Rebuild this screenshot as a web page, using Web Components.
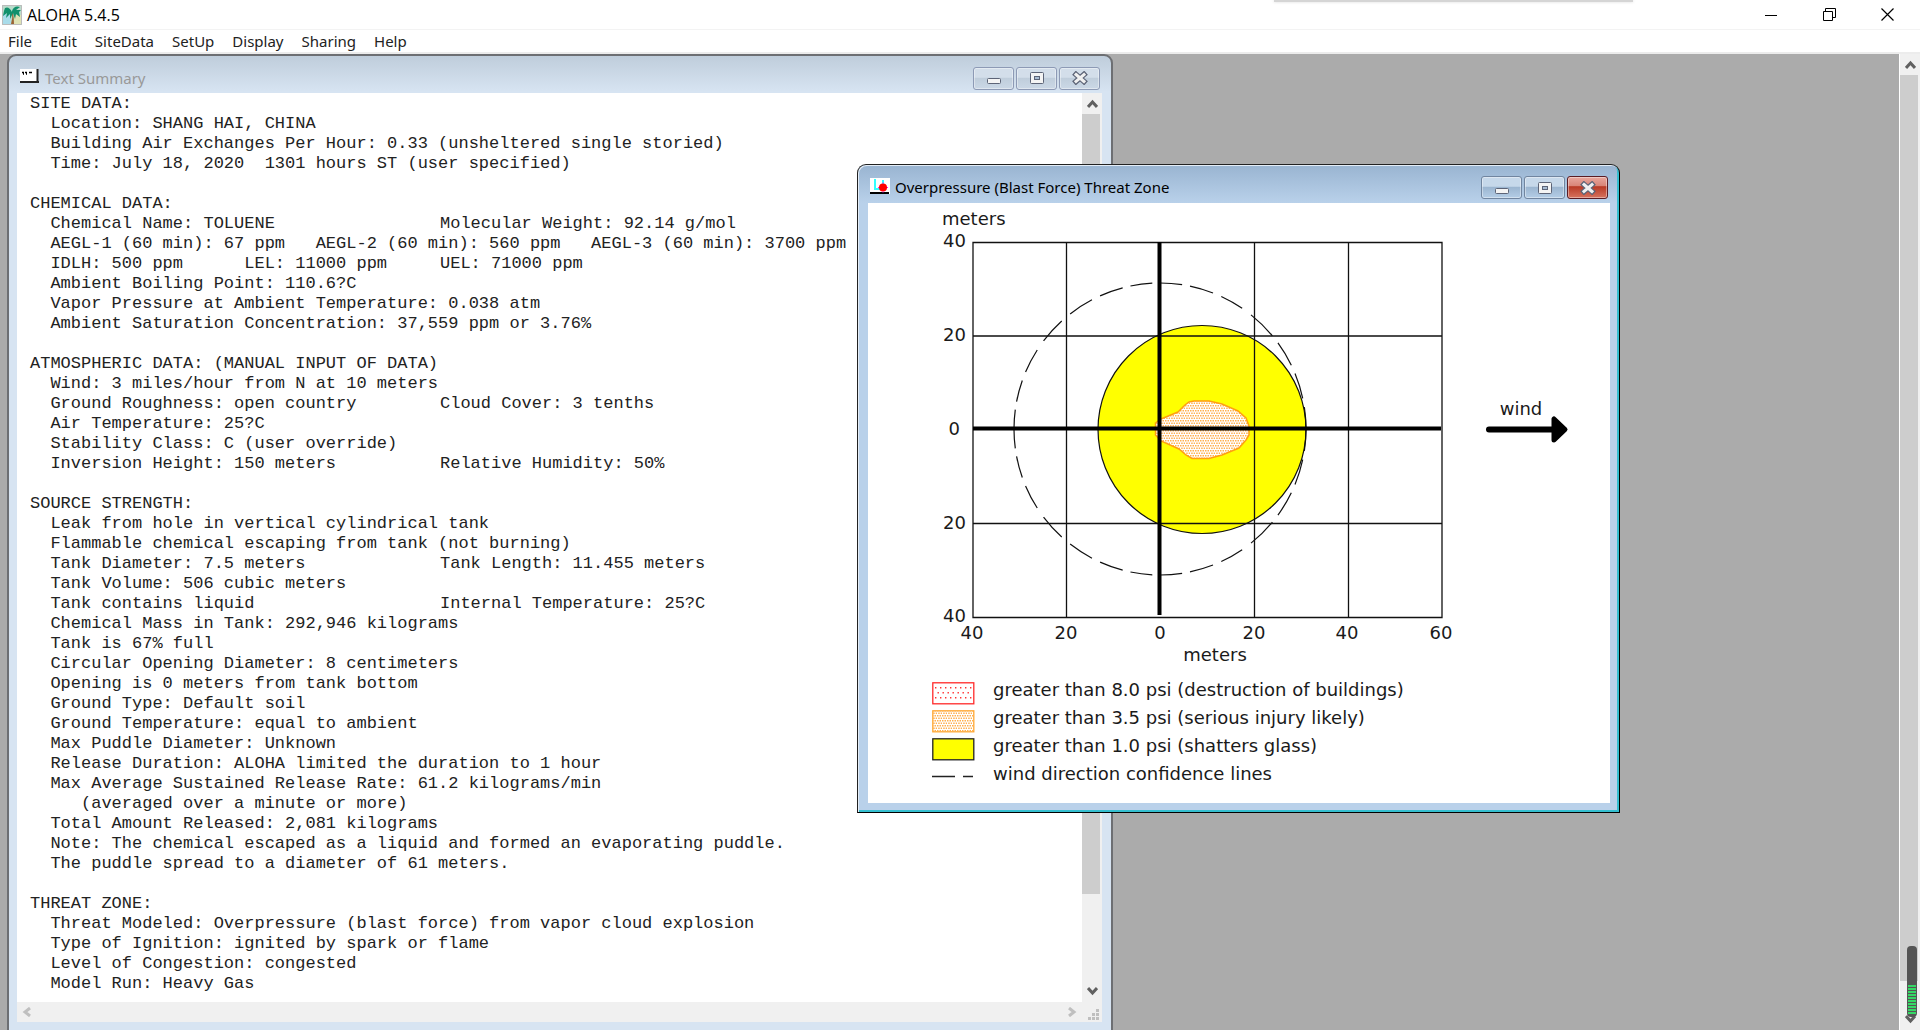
<!DOCTYPE html>
<html lang="en">
<head>
<meta charset="utf-8">
<title>ALOHA 5.4.5</title>
<style>
html,body{height:100%;margin:0;overflow:hidden}
body{font-family:"Noto Sans","Open Sans",sans-serif;font-size:15px;color:#000}
</style>
</head>
<body>
<aloha-app>
  <text-window></text-window>
  <threat-window></threat-window>
</aloha-app>

<script>
const define = (name, html, setup) => customElements.define(name, class extends HTMLElement {
  connectedCallback() {
    if (this.shadowRoot) return;
    const root = this.attachShadow({ mode: 'open' });
    const t = document.createElement('template');
    t.innerHTML = '<style>*{box-sizing:border-box}button{font:inherit;color:inherit;border:0;padding:0;margin:0;background:none}</style>' + html;
    root.append(t.content.cloneNode(true));
    if (setup) setup(this, root);
  }
});

/* Scroll bar: direction "v" or "h"; the thumb share comes from --thumb */
define('scroll-bar', `
<style>
:host{display:flex;flex-direction:column;background:#f0f0f0;width:20px}
:host([dir=h]){flex-direction:row;width:auto;height:20px}
button{flex:none;display:grid;place-items:center;height:21px}
:host([dir=h]) button{width:21px;height:20px}
.track{flex:1;display:flex;flex-direction:column;min-height:0}
.thumb{height:var(--thumb,0%);background:#cdcdcd;margin-right:2px}
svg{display:block;fill:none;stroke:#606060;stroke-width:3}
:host([dir=h]) svg{stroke:#bfbfbf}
</style>
<button class="a"><svg width="11" height="10"><path/></svg></button>
<div class="track"><div class="thumb"></div></div>
<button class="b"><svg width="11" height="10"><path/></svg></button>`,
(el, root) => {
  const h = el.getAttribute('dir') === 'h';
  const [a, b] = root.querySelectorAll('path');
  a.setAttribute('d', h ? 'M8 1L3 5L8 9' : 'M1 8L5.500 3L10 8');
  b.setAttribute('d', h ? 'M3 1L8 5L3 9' : 'M1 1L5.500 6L10 1');
  const [p, q] = root.querySelectorAll('button');
  p.setAttribute('aria-label', h ? 'Scroll left' : 'Scroll up');
  q.setAttribute('aria-label', h ? 'Scroll right' : 'Scroll down');
});

/* Framed child window */
define('mdi-window', `
<style>
:host{display:flex;flex-direction:column;height:100%;border:2px solid #6d6f73;border-radius:9px 9px 0 0;
  background:linear-gradient(#bfcddb,#d7e4f2 36px);padding:0 9px 8px 8px;color:#999;overflow:hidden;
  --b1:#d3deea;--b2:#bfcddb;--b3:#cbd8e6;--line:#8d9ab5}
:host([active]){color:#000;border:1px solid #222;border-right-color:#000;border-bottom-color:#000;
  background:linear-gradient(#99b4d1,#b9d1ea 38px);
  box-shadow:inset 1px 1px #e4edf7,inset -2px -2px #35bfd0;padding:0 9px 9px 10px;
  --b1:#c6d8ea;--b2:#9ab4cf;--b3:#b4cde6;--line:#71859f}
header{flex:none;display:flex;align-items:center;height:37px;gap:6px}
:host([active]) header{height:38px;gap:5px}
h2{flex:1;margin:0;font-size:15px;font-weight:400;line-height:20px;padding-top:6px;white-space:nowrap}
::slotted(svg){display:block;flex:none;margin:4px 0 0 3px}
:host([active]) ::slotted(svg){margin-left:2px}
.btns{display:flex;gap:2px;padding:7px 2px 0 0}
.btns button{width:41px;height:23px;border:1px solid var(--line);border-radius:3px;display:grid;place-items:center;
  box-shadow:inset 0 0 0 1px #ffffff66;background:linear-gradient(var(--b1),var(--b1) 45%,var(--b2) 46%,var(--b3))}
:host([active]) .x{--line:#5a1c24;background:linear-gradient(#e8a79e,#d98578 42%,#b93a26 46%,#d6735f)}
.btns svg{display:block}
.body{flex:1;min-height:0;background:#fff;color:#000;display:flex;flex-direction:column}
</style>
<header><slot name="icon"></slot><h2></h2>
<div class="btns">
<button aria-label="Minimize"><svg width="16" height="14"><rect x="1.500" y="7.500" width="13" height="5" rx="1" fill="#f4f4f4" stroke="#5d6477"/></svg></button>
<button aria-label="Maximize"><svg width="16" height="14"><rect x="1.500" y="1.500" width="13" height="11" rx="1" fill="#f4f4f4" stroke="#5d6477"/><rect x="5.500" y="5.500" width="5" height="3" fill="#a9bdd3" stroke="#5d6477"/></svg></button>
<button class="x" aria-label="Close"><svg width="16" height="14"><path d="M4 3.500L12 10.500M12 3.500L4 10.500" stroke="#5d6477" stroke-width="5.500" stroke-linecap="square"/><path d="M4 3.500L12 10.500M12 3.500L4 10.500" stroke="#f0f0f0" stroke-width="3" stroke-linecap="square"/></svg></button>
</div></header>
<div class="body"><slot></slot></div>`,
(el, root) => { root.querySelector('h2').textContent = el.getAttribute('caption'); });

define('text-window', `
<style>
:host{display:block;position:absolute;left:7px;top:0;bottom:-2px;width:1106px}
.main{flex:1;display:flex;min-height:0}
pre{flex:1;margin:0;padding:1px 0 0 13px;font:17px/20px "Liberation Mono",monospace;tab-size:410px;color:#222;overflow:hidden}
.foot{display:flex;height:20px;background:#f0f0f0}
.foot scroll-bar{flex:1}
scroll-bar[dir=v]{--thumb:90%}
</style>
<mdi-window caption="Text Summary">
<svg slot="icon" width="19" height="15" viewBox="0 0 19 15"><path fill="#fff" d="M0 0h18v13H0z"/><path d="M17.500 0v13M0 13h19" stroke="#222" stroke-width="2"/><path d="M2 3.500h2M5 3.500h2M9 3.500h3M3 5h1M6 5h1" stroke="#000" stroke-width="1.500"/></svg>
<div class="main"><pre>SITE DATA:
  Location: SHANG HAI, CHINA
  Building Air Exchanges Per Hour: 0.33 (unsheltered single storied)
  Time: July 18, 2020  1301 hours ST (user specified)

CHEMICAL DATA:
  Chemical Name: TOLUENE&#9;Molecular Weight: 92.14 g/mol
  AEGL-1 (60 min): 67 ppm   AEGL-2 (60 min): 560 ppm   AEGL-3 (60 min): 3700 ppm
  IDLH: 500 ppm      LEL: 11000 ppm&#9;UEL: 71000 ppm
  Ambient Boiling Point: 110.6?C
  Vapor Pressure at Ambient Temperature: 0.038 atm
  Ambient Saturation Concentration: 37,559 ppm or 3.76%

ATMOSPHERIC DATA: (MANUAL INPUT OF DATA)
  Wind: 3 miles/hour from N at 10 meters
  Ground Roughness: open country&#9;Cloud Cover: 3 tenths
  Air Temperature: 25?C
  Stability Class: C (user override)
  Inversion Height: 150 meters&#9;Relative Humidity: 50%

SOURCE STRENGTH:
  Leak from hole in vertical cylindrical tank
  Flammable chemical escaping from tank (not burning)
  Tank Diameter: 7.5 meters&#9;Tank Length: 11.455 meters
  Tank Volume: 506 cubic meters
  Tank contains liquid&#9;Internal Temperature: 25?C
  Chemical Mass in Tank: 292,946 kilograms
  Tank is 67% full
  Circular Opening Diameter: 8 centimeters
  Opening is 0 meters from tank bottom
  Ground Type: Default soil
  Ground Temperature: equal to ambient
  Max Puddle Diameter: Unknown
  Release Duration: ALOHA limited the duration to 1 hour
  Max Average Sustained Release Rate: 61.2 kilograms/min
     (averaged over a minute or more)
  Total Amount Released: 2,081 kilograms
  Note: The chemical escaped as a liquid and formed an evaporating puddle.
  The puddle spread to a diameter of 61 meters.

THREAT ZONE:
  Threat Modeled: Overpressure (blast force) from vapor cloud explosion
  Type of Ignition: ignited by spark or flame
  Level of Congestion: congested
  Model Run: Heavy Gas</pre><scroll-bar dir="v"></scroll-bar></div>
<div class="foot"><scroll-bar dir="h"></scroll-bar><svg width="20" height="20" fill="#bfbfbf"><path d="M14 7h3v3h-3zM10 11h3v3h-3zM14 11h3v3h-3zM6 15h3v3H6zM10 15h3v3h-3zM14 15h3v3h-3z"/></svg></div>
</mdi-window>`);

define('threat-plot', `
<style>
:host{display:block}
svg{display:block;font-family:"DejaVu Sans",sans-serif;font-size:18px;fill:#1a1a1a}
</style>
<svg width="742" height="472" viewBox="868 203 742 472">
<defs><pattern id="dots" width="5" height="5" patternUnits="userSpaceOnUse"><path fill="#fff" d="M0 0h5v5H0z"/><path fill="#ffb050" d="M0 0h1.500v1.400H0zM2.500 0h1.500v1.400H2.500zM1.200 2.500h1.500v1.400H1.200zM3.700 2.500H5v1.400H3.700z"/></pattern></defs>
<circle cx="1202" cy="429.500" r="104" fill="#ff0" stroke="#111" stroke-width="1.200"/>
<path d="M1155.500 423L1161 419L1178 412L1185 405L1189 402L1194 401H1209L1222 404L1238 411L1246 418L1249 426V435L1246 440L1239 448L1222 455L1209 458.500H1192L1186 455L1179 449L1161 441L1155.500 435Z" fill="url(#dots)" stroke="#ffa010" stroke-width="1.500"/>
<g fill="none" stroke="#111" stroke-width="1.200" stroke-dasharray="22 9 26 9 26 9 30 11 24 9 24 8 22 8 22 8 24 9 26 11 27 11 25 9 22 8 19">
<path d="M1306 429A146 146 0 0 0 1014 429"/><path d="M1306 429A146 146 0 0 1 1014 429"/></g>
<g fill="none" stroke="#111" stroke-width="1.300"><path d="M973 242.500H1442V617.500H973ZM1066.500 242V617M1254.500 242V617M1348.500 242V617M973 336H1442M973 523.500H1442"/></g>
<path d="M1159.500 242V615M973 428.500H1441" stroke="#000" stroke-width="4"/>
<text x="942" y="225">meters</text>
<g text-anchor="end"><text x="966" y="247">40</text><text x="966" y="341">20</text><text x="960" y="435">0</text><text x="966" y="529">20</text><text x="966" y="622">40</text></g>
<g text-anchor="middle"><text x="972" y="639">40</text><text x="1066" y="639">20</text><text x="1160" y="639">0</text><text x="1254" y="639">20</text><text x="1347" y="639">40</text><text x="1441" y="639">60</text><text x="1215" y="661">meters</text><text x="1521" y="415">wind</text></g>
<path d="M1489 429.500H1552" stroke="#000" stroke-width="6" stroke-linecap="round"/>
<path d="M1554 419V440L1565 429.500Z" fill="#000" stroke="#000" stroke-width="5" stroke-linejoin="round"/>
</svg>`);

define('legend-row', `
<style>
:host{display:flex;gap:18px;height:28px;font:18px/28px "DejaVu Sans",sans-serif;color:#1a1a1a;white-space:nowrap}
svg{display:block;flex:none;margin-top:6px}
</style>
<svg width="43" height="23"></svg><span><slot></slot></span>`,
(el, root) => {
  const kind = el.getAttribute('kind');
  const box = (fill, line) => `<rect x="0.800" y="0.800" width="41" height="21" fill="${fill}" stroke="${line}" stroke-width="1.300"/>`;
  root.querySelector('svg').innerHTML = {
    red: `<pattern id="p" width="5" height="10" patternUnits="userSpaceOnUse"><path fill="#f33" d="M3 5h1.400v1.400H3zM.5 0h1.400v1.400H.5z"/></pattern>` + box('#fff', '#ff2a2a') + '<rect x="2" y="3" width="38" height="17" fill="url(#p)"/>',
    orange: `<pattern id="p" width="5" height="5" patternUnits="userSpaceOnUse"><path fill="#ffb050" d="M0 0h1.500v1.400H0zM2.500 0h1.500v1.400H2.500zM1.200 2.500h1.500v1.400H1.200zM3.700 2.500H5v1.400H3.700z"/></pattern>` + box('#fff', '#ffa630') + '<rect x="1" y="1" width="40" height="20" fill="url(#p)"/>',
    yellow: box('#ff0', '#222'),
    dash: '<path d="M0 10.500h23M31 10.500h10" stroke="#222" stroke-width="1.300"/>'
  }[kind];
});

define('threat-window', `
<style>
:host{display:block;position:absolute;left:857px;top:110px;width:763px}
.legend{padding:1px 0 15px 64px}
</style>
<mdi-window active caption="Overpressure (Blast Force) Threat Zone">
<svg slot="icon" width="20" height="16" viewBox="0 0 20 16"><path fill="#fff" d="M0 0h20v16H0z"/><path d="M5 1v10h5M13 2v6" stroke="#3ff" stroke-width="2" fill="none"/><path d="M0 15h19" stroke="#000" stroke-width="2"/><circle cx="13" cy="9.500" r="4" fill="#f00"/><path d="M13 4.500v10M8 9.500h10" stroke="#f0f" stroke-dasharray="1 8"/></svg>
<threat-plot></threat-plot>
<div class="legend">
<legend-row kind="red">greater than 8.0 psi (destruction of buildings)</legend-row>
<legend-row kind="orange">greater than 3.5 psi (serious injury likely)</legend-row>
<legend-row kind="yellow">greater than 1.0 psi (shatters glass)</legend-row>
<legend-row kind="dash">wind direction confidence lines</legend-row>
</div>
</mdi-window>`);

define('aloha-app', `
<style>
:host{display:flex;flex-direction:column;height:100%;background:#fff;position:relative}
.title{flex:none;height:30px;display:flex;align-items:center;border-bottom:1px solid #f3f3f3;padding:0 4px 0 2px;gap:5px}
.title h1{flex:1;margin:0;font:16px/22px "Open Sans",sans-serif}
.title svg{display:block}
.sys{display:flex}
.sys button{width:58px;height:28px;display:grid;place-items:center}
nav{flex:none;height:24px;display:flex;gap:18px;padding-left:8px;align-items:center;border-bottom:2px solid #ececec;font-size:15px;line-height:20px;color:#222}
.client{flex:1;display:flex;min-height:0}
.desk{flex:1;position:relative;overflow:hidden;background:#ababab}
.client>scroll-bar{width:21px;border-left:1px solid #fff;--thumb:97%}
.shade{position:absolute;left:1274px;top:0;width:359px;height:2px;background:#d5d5d5;box-shadow:0 0 3px #d5d5d5}
.meter{position:absolute;right:3px;bottom:13px}
</style>
<div class="title">
<svg width="20" height="20" viewBox="0 0 20 20"><path fill="#b9dccb" d="M0 0h20v20H0z"/><path fill="#a9dcea" d="M1 9h8v10H1z"/><path fill="#dfe3b5" d="M12 10h7v9h-7z"/><path d="M10 8Q11 13 9 19h3Q12 13 11 8z" fill="#9c6434"/><path d="M10 7Q7 1 3 3L2 6L1 11L5 8L4 13L8 9L8 14L11 8L13 14L14 9L18 12L17 7L19 5L14 5L18 2Q12 0 10 6Z" fill="#12906c"/><path d="M.5 .5h19v19H.5z" fill="none" stroke="#bbb"/></svg>
<h1>ALOHA 5.4.5</h1>
<div class="sys">
<button aria-label="Minimize"><svg width="12" height="12"><path d="M0 6.500h12" stroke="#000"/></svg></button>
<button aria-label="Restore"><svg width="13" height="13" fill="none" stroke="#000"><path d="M.5 3.500h9v9h-9zM2.500 3V.5h10v9H10"/></svg></button>
<button aria-label="Close"><svg width="13" height="13"><path d="M.5 .5l12 12M12.500 .5l-12 12" stroke="#000" stroke-width="1.200"/></svg></button>
</div></div>
<nav><button>File</button><button>Edit</button><button>SiteData</button><button>SetUp</button><button>Display</button><button>Sharing</button><button>Help</button></nav>
<div class="client"><div class="desk"><slot></slot></div><scroll-bar dir="v"></scroll-bar></div>
<div class="shade"></div>
<svg class="meter" width="10" height="71"><rect width="10" height="71" rx="4" fill="#555"/><path d="M5 39v30" stroke="#35d865" stroke-width="8" stroke-dasharray="2 1"/></svg>`);
</script>
</body>
</html>
